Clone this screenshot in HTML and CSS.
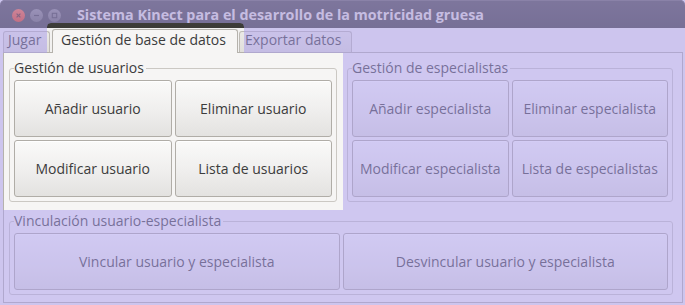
FILE: index.html
```html
<!DOCTYPE html>
<html>
<head>
<meta charset="utf-8">
<title>Sistema Kinect para el desarrollo de la motricidad gruesa</title>
<link rel="stylesheet" href="styles.css">
</head>
<body>
<div class="window">
  <div class="titlebar">
    <div class="controls">
      <svg class="ctl" viewBox="0 0 13 13">
        <defs>
          <linearGradient id="red" x1="0" y1="0" x2="0" y2="1">
            <stop offset="0" stop-color="#f4683a"/>
            <stop offset="1" stop-color="#dc3a12"/>
          </linearGradient>
          <linearGradient id="grey" x1="0" y1="0" x2="0" y2="1">
            <stop offset="0" stop-color="#86847e"/>
            <stop offset="1" stop-color="#65635d"/>
          </linearGradient>
        </defs>
        <circle cx="6.5" cy="6.5" r="6.5" fill="url(#red)"/>
        <path d="M4.6 4.6l3.8 3.8M8.4 4.6l-3.8 3.8" stroke="#5a2410" stroke-width="1.2"/>
      </svg>
      <svg class="ctl" viewBox="0 0 13 13">
        <circle cx="6.5" cy="6.5" r="6.5" fill="url(#grey)"/>
        <path d="M4 6.5h5" stroke="#3c3b37" stroke-width="1.2"/>
      </svg>
      <svg class="ctl" viewBox="0 0 13 13">
        <circle cx="6.5" cy="6.5" r="6.5" fill="url(#grey)"/>
        <rect x="4.3" y="4.3" width="4.4" height="4.4" fill="none" stroke="#3c3b37" stroke-width="1.1"/>
      </svg>
    </div>
    <div class="title">Sistema Kinect para el desarrollo de la motricidad gruesa</div>
  </div>

  <div class="tabs">
    <div class="tab play">Jugar</div>
    <div class="tab active">Gestión de base de datos</div>
    <div class="tab export">Exportar datos</div>
  </div>

  <div class="panel">
    <div class="row">
      <fieldset class="group users">
        <legend>Gestión de usuarios</legend>
        <div class="grid">
          <button>Añadir usuario</button>
          <button>Eliminar usuario</button>
          <button>Modificar usuario</button>
          <button>Lista de usuarios</button>
        </div>
      </fieldset>
      <fieldset class="group specialists">
        <legend>Gestión de especialistas</legend>
        <div class="grid">
          <button>Añadir especialista</button>
          <button>Eliminar especialista</button>
          <button>Modificar especialista</button>
          <button>Lista de especialistas</button>
        </div>
      </fieldset>
    </div>
    <fieldset class="group link">
      <legend>Vinculación usuario-especialista</legend>
      <div class="grid">
        <button>Vincular usuario y especialista</button>
        <button>Desvincular usuario y especialista</button>
      </div>
    </fieldset>
  </div>

  <div class="overlay"></div>
</div>
</body>
</html>
```
FILE: styles.css
```css
body {
  margin: 0;
  background-color: #f2f1f0;
  font-family: "Open Sans", sans-serif;
  font-size: 14px;
  color: #3c3c3c;
}
.window {
  position: relative;
  width: 685px;
  height: 305px;
  overflow: hidden;
  background-color: #f2f1f0;
}
.titlebar {
  height: 28px;
  display: flex;
  align-items: center;
  padding-left: 12px;
  background: linear-gradient(#4a4944, #3c3b37);
  border-radius: 5px 5px 0 0;
  box-shadow: inset 0 1px #65635d;
}
.controls {
  display: flex;
  gap: 5px;
  margin-top: 3px;
}
.ctl {
  width: 13px;
  height: 13px;
}
.title {
  margin-left: 16px;
  font-weight: bold;
  font-size: 14.3px;
  color: #e2ded6;
}
.tabs {
  height: 24px;
  display: flex;
  align-items: flex-end;
  padding-left: 3px;
}
.tab {
  height: 21px;
  box-sizing: border-box;
  padding: 0 0 5px 5px;
  line-height: 15px;
  border: 1px solid #bdbab4;
  border-bottom: none;
  border-radius: 3px 3px 0 0;
  background: linear-gradient(#ebe9e6, #e1dfdb);
  margin-right: 2px;
  white-space: nowrap;
}
.tab.play {
  width: 47px;
  padding-left: 4px;
}
.tab.export {
  width: 113px;
}
.tab.active {
  position: relative;
  z-index: 1;
  width: 186px;
  height: 24px;
  margin-bottom: -1px;
  margin-right: 1px;
  padding: 2px 0 6px 8px;
  background: #f6f5f4;
  border-color: #b5b2ac;
}
.panel {
  height: 251px;
  box-sizing: border-box;
  margin: 0 2px 0 3px;
  padding: 7px 8px 0 5px;
  border: 1px solid #b5b2ac;
  background-color: #f6f5f4;
}
.row {
  display: flex;
  gap: 10px;
}
.group {
  margin: 0;
  padding: 4px 4px 4px 4px;
  border: 1px solid #cbc8c3;
  border-radius: 3px;
  min-width: 0;
}
.users {
  width: 328px;
  box-sizing: border-box;
}
.specialists {
  width: 326px;
  box-sizing: border-box;
}
.link {
  width: 664px;
  box-sizing: border-box;
  margin-top: 11px;
}
legend {
  padding: 0 2px 0 0;
  line-height: 16px;
}
.grid {
  display: grid;
  grid-template-columns: 1fr 1fr;
  gap: 3px;
}
button {
  height: 57px;
  margin: 0;
  padding: 0;
  font-family: "Open Sans", sans-serif;
  font-size: 14px;
  color: #3c3c3c;
  border: 1px solid #b0ada7;
  border-radius: 3px;
  background: linear-gradient(#fafaf9, #efeeed 55%, #e3e2e0);
  box-shadow: inset 0 1px #ffffff;
}
.overlay {
  position: absolute;
  top: 0;
  left: 0;
  width: 685px;
  height: 305px;
  pointer-events: none;
  background-color: rgba(172, 159, 236, 0.53);
  clip-path: polygon(evenodd,
    0 0, 685px 0, 685px 305px, 0 305px, 0 0,
    51px 23px, 48px 24px, 47px 27px, 47px 53px, 3px 53px, 3px 210px,
    343px 210px, 343px 53px, 244px 53px, 244px 27px, 243px 24px, 240px 23px,
    51px 23px);
}
```
